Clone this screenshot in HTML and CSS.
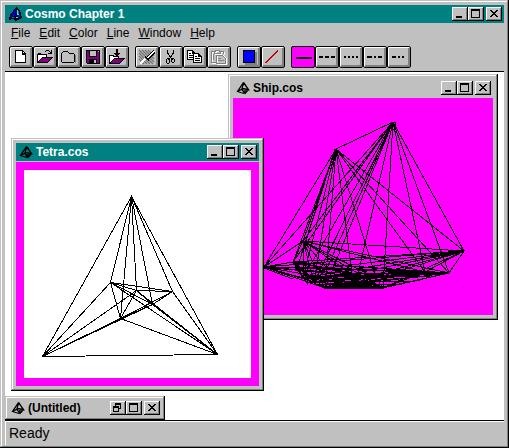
FILE: index.html
```html
<!DOCTYPE html>
<html lang="en">
<head>
<meta charset="utf-8">
<title>Cosmo Chapter 1</title>
<link rel="stylesheet" href="styles.css">
</head>
<body>
<svg class="symbols" aria-hidden="true">
  <symbol id="min" viewBox="0 0 16 14"><path d="M4 9h6v2H4z"/></symbol>
  <symbol id="max" viewBox="0 0 16 14"><path fill-rule="evenodd" d="M3 2h9v9H3zM4 4v6h7V4z"/></symbol>
  <symbol id="close" viewBox="0 0 16 14"><path d="M4 3h2v1h1v1h2V4h1V3h2v1h-1v1h-1v1H9v1h1v1h1v1h1v1h-2V9H9V8H7v1H6v1H4V9h1V8h1V7h1V6H6V5H5V4H4z"/></symbol>
  <symbol id="restore" viewBox="0 0 16 14"><path fill-rule="evenodd" d="M5 2h6v6H9v3H3V5h2zM6 4v1h3v2h1V4zM4 7v3h4V7z"/></symbol>
  <symbol id="doc" viewBox="0 0 16 16"><path fill="none" stroke="#000" stroke-width="1.3" shape-rendering="geometricPrecision" d="M8.500 2.500L2.500 11.500L9 13.500M8.500 2.500L7 9L2.500 11.500M8.500 2.500L13.500 9.500L7 8.500M7 9.500L10 13.500L13.500 9.500M9 11L12 11"/></symbol>
</svg>
<main class="frame app">
  <header class="titlebar active">
    <svg class="icon" viewBox="0 0 16 16"><path d="M9 1L13 4L15 12L9 15L6 13L2 14L3 9Z"/><path fill="#000080" d="M8 3L4 9L3 12L8 12L10 5Z"/><path fill="#0000ff" d="M8 5L5 9L7 11ZM11 7L13 10L11 12Z"/><path fill="#00ffff" d="M10 4h1v2h1v3h-2zM9 11h2v1H9z"/><path fill="#008080" d="M11 5h1v3h-1zM5 11h2v1H5z"/></svg>
    <h1 class="title">Cosmo Chapter 1</h1>
    <button class="ctl" aria-label="Minimize"><svg><use href="#min"/></svg></button><button class="ctl" aria-label="Maximize"><svg><use href="#max"/></svg></button><button class="ctl close" aria-label="Close"><svg><use href="#close"/></svg></button>
  </header>
  <nav class="menu">
    <button><u>F</u>ile</button><button><u>E</u>dit</button><button><u>C</u>olor</button><button><u>L</u>ine</button><button><u>W</u>indow</button><button><u>H</u>elp</button>
  </nav>
  <div class="toolbar" role="toolbar">
    <div class="group">
      <button class="tool" aria-label="New"><svg viewBox="0 0 24 22"><path d="M6 4h8v1h1v1h1v1h1v10H6z"/><path fill="#fff" d="M7 5h6v4h3v7H7z"/><path fill="#fff" d="M14 6h1v1h-1z"/></svg></button>
      <button class="tool" aria-label="Open"><svg viewBox="0 0 24 22"><path d="M4 8h1V7h3v1h6v3h6v1h-1v1h-1v1h-1v1h-1v1h-1v1H4z"/><path fill="#fff" d="M5 9h8v2H9v1H8v1H7v1H6v1H5z"/><path fill="#800080" d="M9 12h9v1h-1v1h-1v1h-1v1H6v-1h1v-1h1v-1h1z"/><path d="M12 5h1V4h3v1h1v1h1V4h1v4h-4V7h2V6h-1V5h-3v1h-1z"/></svg></button>
      <button class="tool" aria-label="Close file"><svg viewBox="0 0 24 22"><path fill="none" stroke="#000" d="M4.500 15.500V7.500L6.500 5.500H10.500L12.500 7.500H16.500L17.500 8.500V15.500L16.500 16.500H5.500Z"/><path stroke="#808080" d="M18.500 9v8"/></svg></button>
      <button class="tool" aria-label="Save"><svg viewBox="0 0 24 22"><path d="M5 4h14v14H6v-1H5z"/><path fill="#800080" d="M6 5h2v6h8V5h2v12h-2v-4H8v4H6z"/><path fill="#c0c0c0" d="M9 5h6v5H9zM13 14h2v3h-2zM17 5h1v1h-1z"/></svg></button>
      <button class="tool" aria-label="Import"><svg viewBox="0 0 24 22"><path d="M4 9h5v1h5v2h6v1h-1v1h-1v1h-1v1h-1v1h-1v1H4z"/><path fill="#fff" d="M5 10h3v1h5v1H9v1H8v1H7v1H6v1H5z"/><path fill="#800080" d="M9 13h9v1h-1v1h-1v1h-1v1H6v-1h1v-1h1v-1h1z"/><path d="M11 3h2v4h2v1h-1v1h-1v1h-2V9h-1V8H9V7h2z"/></svg></button>
    </div>
    <div class="group">
      <button class="tool" aria-label="Brush"><svg viewBox="0 0 24 22"><path fill="none" stroke="#707070" stroke-width="1.200" shape-rendering="geometricPrecision" d="M4 4l14 14M7 4l12 12M10 4l9 9M13 4l6 6M4 7l11 11M4 10l8 8M4 13l5 5"/><path fill="none" stroke="#fff" stroke-width="2" d="M19 5l-8 8M10 13l-5 5"/><path fill="none" stroke="#000" d="M18.500 4.500l-7 7M10 10.500l4 4M20 6.500l-7 7"/></svg></button>
      <button class="tool" aria-label="Cut"><svg viewBox="0 0 24 22"><path fill="none" stroke="#000" stroke-width="1.200" d="M8.500 4v3L13.500 14M14.500 4v3L9.500 14M8.500 12.500h1l1 1v3l-1 1h-1l-1-1v-3zM13.500 12.500h1l1 1v2l-1 1h-1l-1-1v-2z"/></svg></button>
      <button class="tool" aria-label="Copy"><svg viewBox="0 0 24 22"><path d="M4 4h6v1h1v1h1v8H4z"/><path fill="#fff" d="M5 5h4v3h2v5H5z"/><path d="M6 7h2v1H6zM6 9h4v1H6zM6 11h4v1H6zM10 7h6v1h1v1h1v1h1v7h-9z"/><path fill="#fff" d="M11 8h4v3h3v5h-7z"/><path d="M12 10h2v1h-2zM12 12h5v1h-5zM12 14h5v1h-5z"/></svg></button>
      <button class="tool" aria-label="Paste" disabled><svg viewBox="0 0 24 22"><g fill="none" stroke="#fff"><path d="M9 17.500H5.500V6.500H8M15 6.500h2.500V9M8.500 8.500v-2h1v-1h4v1h1v2zM10.500 18.500v-9h6l3 3v6z"/></g><g fill="none" stroke="#808080"><path d="M9 16.500H4.500V5.500H8M14 5.500h2.500V8M7.500 7.500v-2h1v-1h4v1h1v2zM9.500 17.500v-8h6l3 3v5zM11 12.500h3M11 14.500h6M6.500 8v6"/></g></svg></button>
    </div>
    <div class="group">
      <button class="tool" aria-label="Color"><svg viewBox="0 0 24 22"><path fill="#808080" d="M8 6h12v13H8z"/><path d="M6 4h12v13H6z"/><path fill="#00f" d="M7 5h10v11H7z"/></svg></button>
      <button class="tool" aria-label="Line"><svg viewBox="0 0 24 22"><path fill="none" stroke="#c00000" stroke-width="1.400" d="M5 17L17 4"/></svg></button>
    </div>
    <div class="group">
      <button class="tool pressed" aria-label="Solid" aria-pressed="true"><svg viewBox="0 0 24 22"><path d="M5 11h16v2H5z"/></svg></button>
      <button class="tool" aria-label="Dash"><svg viewBox="0 0 24 22"><path d="M4 10h4v2H4zM10 10h4v2h-4zM16 10h4v2h-4z"/></svg></button>
      <button class="tool" aria-label="Dot"><svg viewBox="0 0 24 22"><path d="M5 10h2v2H5zM9 10h2v2H9zM13 10h2v2h-2zM17 10h2v2h-2z"/></svg></button>
      <button class="tool" aria-label="Dash dot"><svg viewBox="0 0 24 22"><path d="M4 10h5v2H4zM11 10h2v2h-2zM15 10h4v2h-4z"/></svg></button>
      <button class="tool" aria-label="Dash dot dot"><svg viewBox="0 0 24 22"><path d="M5 10h4v2H5zM11 10h2v2h-2zM15 10h2v2h-2z"/></svg></button>
    </div>
  </div>
  <section class="desktop">
    <article class="frame child ship">
      <header class="titlebar">
        <svg class="icon"><use href="#doc"/></svg>
        <h2 class="title">Ship.cos</h2>
        <button class="ctl" aria-label="Minimize"><svg><use href="#min"/></svg></button><button class="ctl" aria-label="Maximize"><svg><use href="#max"/></svg></button><button class="ctl close" aria-label="Close"><svg><use href="#close"/></svg></button>
      </header>
      <div class="view">
        <svg class="drawing" viewBox="233 98 260 217" role="img" aria-label="Ship wireframe">
          <!-- fans from the two mast heads -->
          <path d="M393 122L336 149L393 122L464 251L393 122L449 273L393 122L425 272L393 122L383 288L393 122L358 274L393 122L264 267L393 122L303 241L393 122L293 262L393 122L303 278L393 122L314 282L393 122L325 288L393 122L327 268"/>
          <path d="M336 149L264 267L336 149L303 241L336 149L293 262L336 149L303 278L336 149L314 282L336 149L325 288L336 149L352 274L336 149L376 278L336 149L425 272L336 149L449 273L336 149L464 251M335 149L299 262M335 150L306 241"/>
          <!-- hull -->
          <path d="M303 241L464 251L303 241L449 273L303 241L425 272L303 241L264 267L303 241L293 262L303 241L303 278L303 241L314 282L303 241L325 288L303 241L352 274L303 241L383 288L303 241L376 278L303 241L327 268"/>
          <path d="M264 267L464 251L264 267L449 273L264 267L425 272L264 267L383 288L264 267L376 278L264 267L352 274L264 267L325 288L264 267L314 282L264 267L303 278L264 267L293 262L264 267L327 268"/>
          <path d="M464 251L293 262L464 251L303 278L464 251L314 282L464 251L325 288L464 251L352 274L464 251L376 278L464 251L383 288L464 251L425 272L464 251L449 273L464 251L327 268"/>
          <path d="M449 273L293 262L449 273L303 278L449 273L314 282L449 273L325 288L449 273L352 274L449 273L376 278L449 273L383 288L449 273L425 272"/>
          <path d="M425 272L293 262L425 272L303 278L425 272L314 282L425 272L325 288L425 272L352 274L425 272L376 278L425 272L383 288L425 272L327 268"/>
          <path d="M293 262L303 278L293 262L314 282L293 262L325 288L293 262L352 274L293 262L376 278L293 262L383 288L293 262L327 268L303 278L352 274L314 282L327 268L325 288L352 274L383 288L327 268L376 278L303 278L383 288L314 282L376 278L325 288L303 278"/>
          <path d="M325 288H383L376 278L352 274M325 287H386L420 280M323 286H390L449 273M314 284H402M312 282L412 281M320 285L430 276M306 279L425 276"/>
          <path d="M264 267L276 266L275 270L264 267M264 268L293 279M295 263L308 285M297 263L312 284M391 122h4v3h-4zM392 126h2v3h-2z"/>
        </svg>
      </div>
    </article>
    <article class="frame child tetra">
      <header class="titlebar active">
        <svg class="icon"><use href="#doc"/></svg>
        <h2 class="title">Tetra.cos</h2>
        <button class="ctl" aria-label="Minimize"><svg><use href="#min"/></svg></button><button class="ctl" aria-label="Maximize"><svg><use href="#max"/></svg></button><button class="ctl close" aria-label="Close"><svg><use href="#close"/></svg></button>
      </header>
      <div class="view matte">
        <svg class="drawing paper" viewBox="24 170 227 208" role="img" aria-label="Tetrahedron wireframe">
          <path d="M131.500 196.500L42.500 356.500L217.500 354.500L131.500 196.500L110.500 282.500M131.500 196.500L120.500 318.500M131.500 196.500L136.500 290.500M131.500 196.500L152.500 304.500M131.500 196.500L172.500 291.500"/>
          <path d="M42.500 356.500L110.500 282.500L217.500 354.500M42.500 356.500L120.500 318.500L217.500 354.500M42.500 356.500L136.500 290.500L217.500 354.500M42.500 356.500L152.500 304.500L217.500 354.500M172.500 291.500L217.500 354.500"/>
          <path d="M110.500 282.500L172.500 291.500L136.500 290.500L110.500 282.500L152.500 304.500L120.500 318.500L110.500 282.500M120.500 318.500L136.500 290.500L152.500 304.500L172.500 291.500L120.500 318.500"/>
        </svg>
      </div>
    </article>
    <article class="frame child untitled">
      <header class="titlebar">
        <svg class="icon"><use href="#doc"/></svg>
        <h2 class="title">(Untitled)</h2>
        <button class="ctl" aria-label="Restore"><svg><use href="#restore"/></svg></button><button class="ctl" aria-label="Maximize"><svg><use href="#max"/></svg></button><button class="ctl close" aria-label="Close"><svg><use href="#close"/></svg></button>
      </header>
    </article>
  </section>
  <footer class="status">Ready</footer>
</main>
</body>
</html>
```
FILE: styles.css
```css
* { box-sizing: border-box; }
body {
  margin: 0;
  font: 12px/18px "Liberation Sans", Arial, sans-serif;
  color: #000;
}
button {
  margin: 0;
  padding: 0;
  border: 0;
  background: none;
  color: inherit;
  font: inherit;
}
svg { display: block; shape-rendering: crispEdges; }
.symbols { position: absolute; width: 0; height: 0; }

/* raised window frame */
.frame {
  display: flex;
  flex-direction: column;
  padding: 5px;
  background: #c0c0c0;
  box-shadow: inset -1px -1px #000, inset 1px 1px #c0c0c0,
    inset -2px -2px #808080, inset 2px 2px #fff;
}
.app { min-height: 100vh; }

.titlebar {
  display: flex;
  flex: none;
  align-items: center;
  height: 18px;
  padding: 0 2px;
}
.active { background: #008080; color: #fff; }
.icon { flex: none; width: 16px; height: 16px; }
.title {
  flex: 1;
  margin: 0 0 0 2px;
  font-size: 12px;
  font-weight: bold;
  line-height: 18px;
  white-space: nowrap;
}
.ctl {
  flex: none;
  width: 16px;
  height: 14px;
  background: #c0c0c0;
  box-shadow: inset -1px -1px #000, inset 1px 1px #fff, inset -2px -2px #808080;
}
.ctl svg { width: 16px; height: 14px; fill: #000; }
.close { margin-left: 2px; }

.menu { display: flex; gap: 9px; height: 19px; padding-left: 6px; }
.menu button { line-height: 20px; }
.menu u { text-underline-offset: 1px; }

.toolbar {
  display: flex;
  gap: 6px;
  padding: 4px 4px 3px;
  border-bottom: 1px solid #000;
}
.group { display: flex; }
.tool {
  width: 24px;
  height: 22px;
  border: 1px solid #000;
  border-radius: 2px;
  background: #c0c0c0;
  box-shadow: inset 1px 1px #fff, inset -2px -2px #808080;
}
.tool svg { width: 24px; height: 22px; margin: -1px; }
.pressed { background: #f0f; box-shadow: none; }

.desktop {
  position: relative;
  flex: 1;
  overflow: hidden;
  border-bottom: 1px solid #000;
  background: #fff;
}
.child { position: absolute; }
.ship { left: 223px; top: 2px; width: 270px; }
.tetra { left: 6px; top: 66px; width: 253px; }
.untitled { left: 0; bottom: 0; width: 160px; }
.untitled .titlebar { height: 14px; padding: 0; }
.view { margin-top: 1px; background: #f0f; }
.matte { padding: 8px; }
.drawing { width: 100%; fill: none; stroke: #000; }
.paper { background: #fff; }

.status {
  height: 24px;
  margin-bottom: -2px;
  padding-left: 3px;
  border-top: 1px solid #fff;
  border-left: 1px solid #fff;
  font-size: 14px;
  line-height: 22px;
}
```
